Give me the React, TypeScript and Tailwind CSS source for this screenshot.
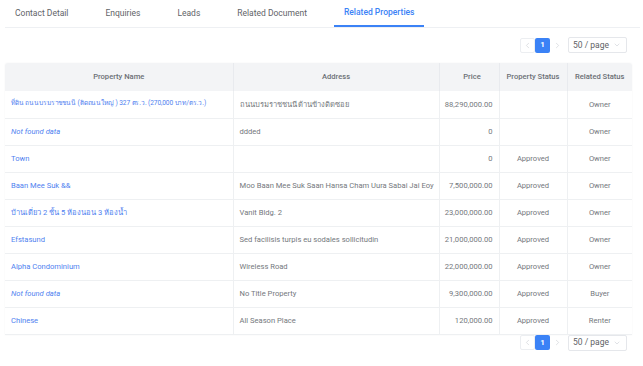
import { ChevronDown, ChevronLeft, ChevronRight } from "lucide-react";

type Row = {
  name: string;
  missing?: boolean;
  thai?: boolean;
  address: string;
  price: string;
  status: string;
  related: string;
};

const rows: Row[] = [
  {
    name: "ที่ดิน ถนนบรมราชชนนี (ติดถนนใหญ่ ) 327 ตร.ว. (270,000 บาท/ตร.ว.)",
    thai: true,
    address: "ถนนบรมราชชนนี ด้านข้างติดซอย",
    price: "88,290,000.00",
    status: "",
    related: "Owner",
  },
  { name: "Not found data", missing: true, address: "ddded", price: "0", status: "", related: "Owner" },
  { name: "Town", address: "", price: "0", status: "Approved", related: "Owner" },
  {
    name: "Baan Mee Suk &&",
    address: "Moo Baan Mee Suk Saan Hansa Cham Uura Sabai Jai Eoy",
    price: "7,500,000.00",
    status: "Approved",
    related: "Owner",
  },
  {
    name: "บ้านเดี่ยว 2 ชั้น 5 ห้องนอน 3 ห้องน้ำ",
    address: "Vanit Bldg. 2",
    price: "23,000,000.00",
    status: "Approved",
    related: "Owner",
  },
  {
    name: "Efstasund",
    address: "Sed facilisis turpis eu sodales sollicitudin",
    price: "21,000,000.00",
    status: "Approved",
    related: "Owner",
  },
  { name: "Alpha Condominium", address: "Wireless Road", price: "22,000,000.00", status: "Approved", related: "Owner" },
  { name: "Not found data", missing: true, address: "No Title Property", price: "9,300,000.00", status: "Approved", related: "Buyer" },
  { name: "Chinese", address: "All Season Place", price: "120,000.00", status: "Approved", related: "Renter" },
];

const tabs = ["Contact Detail", "Enquiries", "Leads", "Related Document", "Related Properties"];

function Pager() {
  return (
    <div className="flex items-center justify-end pr-[16px] h-[16px]">
      <div className="flex h-[15px] w-[15px] items-center justify-center rounded-[2px] border border-[#eceef1] text-[#c7cbd1]">
        <ChevronLeft size={9} strokeWidth={1.5} />
      </div>
      <div className="flex h-[15px] w-[15px] items-center justify-center rounded-[2px] bg-[#3b82f6] text-[8px] font-bold text-white">
        1
      </div>
      <div className="flex h-[15px] w-[15px] items-center justify-center text-[#c7cbd1]">
        <ChevronRight size={9} strokeWidth={1.5} />
      </div>
      <div className="ml-[3px] flex h-[16px] w-[59px] items-center justify-between rounded-[2px] border border-[#e5e7eb] pl-[4px] pr-[5px] text-[8.5px] text-[#606266]">
        <span>50 / page</span>
        <ChevronDown size={8} strokeWidth={1.5} className="text-[#c0c4cc]" />
      </div>
    </div>
  );
}

export default function App() {
  return (
    <div
      className="h-[366px] w-[643px] bg-white"
      style={{ fontFamily: "Roboto, 'Noto Sans', 'DejaVu Sans', sans-serif" }}
    >
      {/* Tabs */}
      <div className="ml-[5px] mr-[3px] flex h-[28px] gap-[17px] border-b border-[#eef0f3]">
        {tabs.map((t, i) => {
          const active = i === tabs.length - 1;
          return (
            <div
              key={t}
              className={`flex items-center px-[10px] text-[8.5px] ${
                active
                  ? "border-b-2 border-[#3b82f6] font-medium text-[#3b82f6]"
                  : "text-[#5f6368]"
              }`}
            >
              {t}
            </div>
          );
        })}
      </div>

      <div className="mt-[9px]">
        <Pager />
      </div>

      {/* Table */}
      <div className="ml-[5px] mt-[10px] w-[627px] overflow-hidden rounded-t-[3px] shadow-[0_0_2px_rgba(0,0,0,0.06)]">
        <table className="w-full table-fixed border-collapse text-[7.6px] text-[#74787d]">
          <colgroup>
            <col className="w-[228px]" />
            <col className="w-[206px]" />
            <col className="w-[60px]" />
            <col className="w-[68px]" />
            <col className="w-[65px]" />
          </colgroup>
          <thead>
            <tr className="h-[28px] bg-[#f3f4f6] text-[#6b6f75]">
              <th className="border-r border-[#e8eaee] font-medium">Property Name</th>
              <th className="border-r border-[#e8eaee] font-medium">Address</th>
              <th className="border-r border-[#e8eaee] pl-[6px] font-medium">Price</th>
              <th className="border-r border-[#e8eaee] font-medium">Property Status</th>
              <th className="font-medium">Related Status</th>
            </tr>
          </thead>
          <tbody>
            {rows.map((r, i) => (
              <tr key={i} className="h-[27px] border-b border-[#eef0f2]">
                <td
                  className={`whitespace-nowrap border-r border-[#eef0f2] px-[6px] text-[#4f7ff0] ${
                    r.missing ? "italic" : ""
                  } ${r.thai ? "text-[6.6px] tracking-[-0.1px]" : ""}`}
                >
                  {r.name}
                </td>
                <td className="whitespace-nowrap border-r border-[#eef0f2] px-[6px]">{r.address}</td>
                <td className="border-r border-[#eef0f2] pr-[6px] text-right">{r.price}</td>
                <td className="border-r border-[#eef0f2] text-center">{r.status}</td>
                <td className="text-center">{r.related}</td>
              </tr>
            ))}
          </tbody>
        </table>
      </div>

      <Pager />
    </div>
  );
}
